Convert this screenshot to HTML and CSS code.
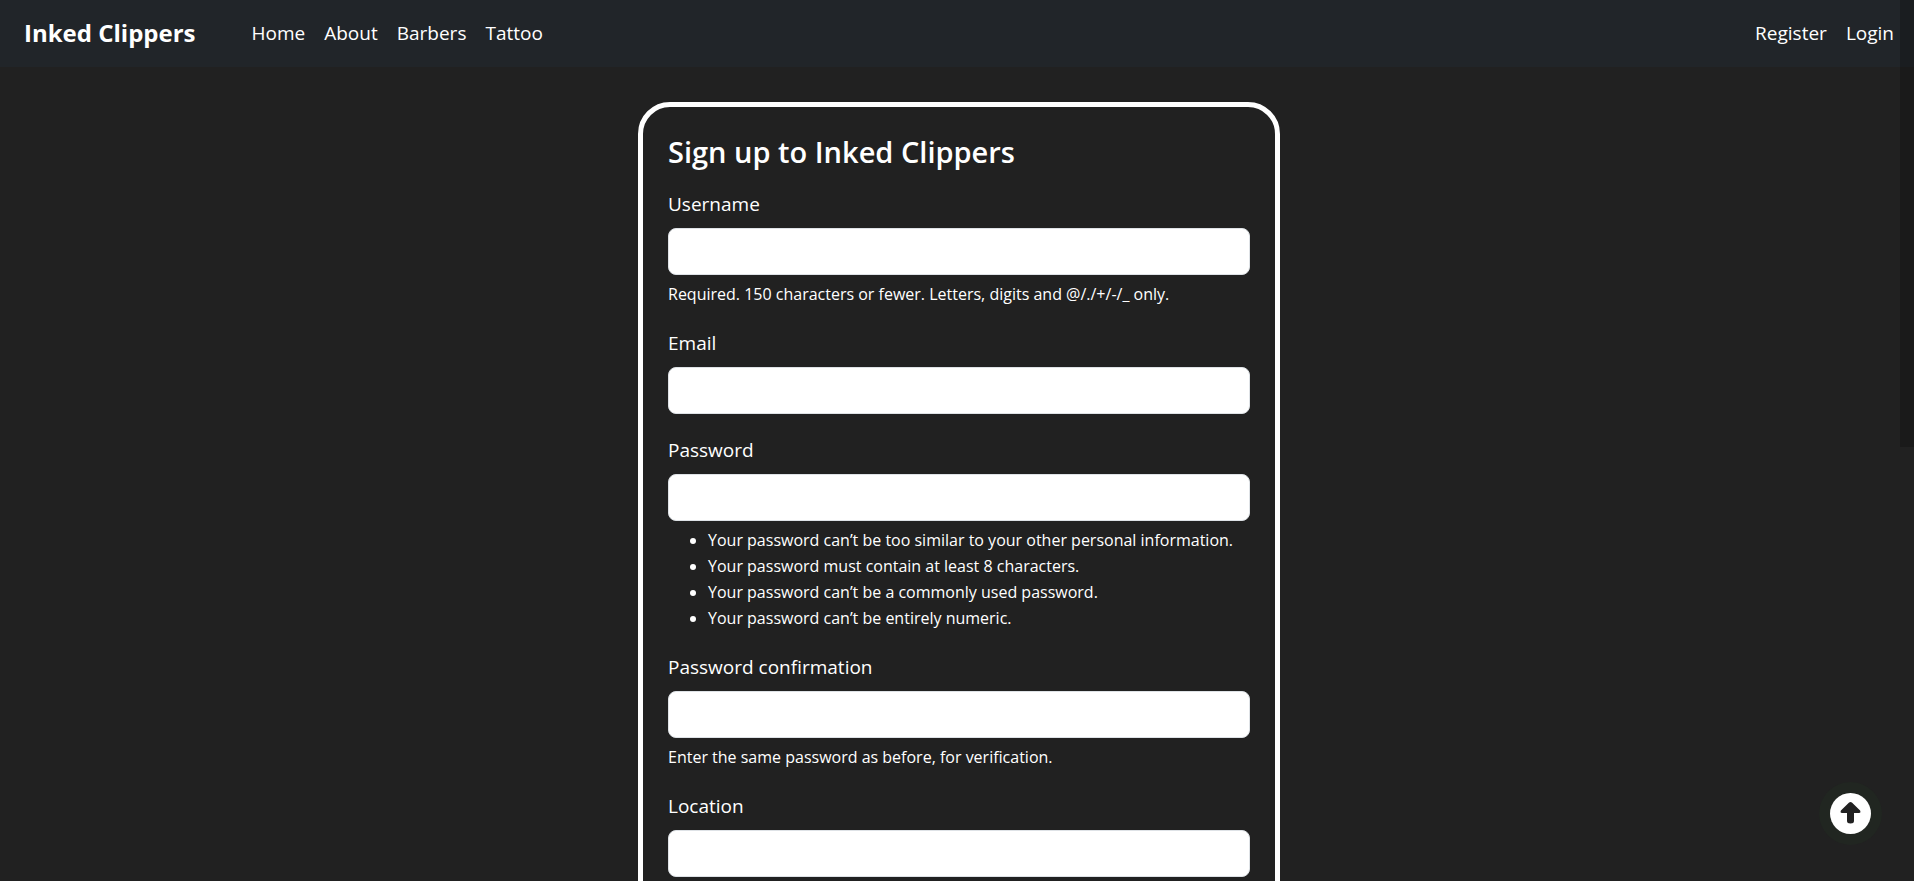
FILE: index.html
```html
<!DOCTYPE html>
<html lang="en">
<head>
<meta charset="utf-8">
<title>Inked Clippers</title>
<link rel="stylesheet" href="styles.css">
</head>
<body>
<header class="navbar">
  <a class="brand" href="#">Inked Clippers</a>
  <nav class="nav-links">
    <a href="#">Home</a>
    <a href="#">About</a>
    <a href="#">Barbers</a>
    <a href="#">Tattoo</a>
  </nav>
  <nav class="nav-links nav-account">
    <a href="#">Register</a>
    <a href="#">Login</a>
  </nav>
</header>
<main class="page">
  <form class="card">
    <h1 class="title">Sign up to Inked Clippers</h1>
    <div class="field">
      <label for="username">Username</label>
      <input id="username" type="text">
      <p class="help">Required. 150 characters or fewer. Letters, digits and @/./+/-/_ only.</p>
    </div>
    <div class="field">
      <label for="email">Email</label>
      <input id="email" type="email">
    </div>
    <div class="field">
      <label for="password1">Password</label>
      <input id="password1" type="password">
      <ul class="help rules">
        <li>Your password can’t be too similar to your other personal information.</li>
        <li>Your password must contain at least 8 characters.</li>
        <li>Your password can’t be a commonly used password.</li>
        <li>Your password can’t be entirely numeric.</li>
      </ul>
    </div>
    <div class="field">
      <label for="password2">Password confirmation</label>
      <input id="password2" type="password">
      <p class="help">Enter the same password as before, for verification.</p>
    </div>
    <div class="field">
      <label for="location">Location</label>
      <input id="location" type="text">
    </div>
  </form>
</main>
<button class="to-top" type="button" aria-label="Back to top">
  <svg viewBox="0 0 41 41" aria-hidden="true">
    <circle class="disc" cx="20.5" cy="20.5" r="20.5"/>
    <path class="arrow" d="M19.1 9.5 L10.9 17.500 Q9.900 20 12 20 H17 V28 Q17 30.500 20.500 30.500 Q24 30.500 24 28 V20 H29 Q31.100 20 30.100 17.500 L21.900 9.500 Q20.500 8.300 19.100 9.500 Z"/>
  </svg>
</button>
<div class="scroll-thumb"></div>
</body>
</html>
```

FILE: styles.css
```css
* {
  box-sizing: border-box;
}

body {
  margin: 0;
  height: 100vh;
  display: flex;
  flex-direction: column;
  overflow: hidden;
  background: #212121;
  color: #fff;
  font-family: "Segoe UI", "Open Sans", "Noto Sans", sans-serif;
  font-size: 19px;
  line-height: 30px;
}

.navbar {
  display: flex;
  align-items: center;
  flex: none;
  padding: 18px 20px 19px 24px;
  background: #212529;
}

.navbar a {
  color: #fff;
  text-decoration: none;
}

.brand {
  margin-right: 56px;
  font-size: 24px;
  font-weight: 700;
}

.nav-links {
  display: flex;
  gap: 19px;
}

.nav-account {
  margin-left: auto;
}

.page {
  flex: 1;
  min-height: 0;
  padding: 35px 0 0 4px;
  overflow: hidden;
}

.card {
  max-width: 642px;
  margin: 0 auto;
  padding: 26px 25px 100px;
  border: 5px solid #fff;
  border-radius: 32px;
}

.title {
  margin: 0 0 18px;
  font-size: 29px;
  font-weight: 600;
  line-height: 38px;
}

.field {
  margin-bottom: 21px;
}

.field label {
  display: block;
  margin-bottom: 9px;
}

.field input {
  display: block;
  width: 100%;
  height: 47px;
  padding: 8px 15px;
  border: 1px solid #dee2e6;
  border-radius: 8px;
  background: #fff;
  color: #212529;
  font: inherit;
}

.help {
  margin: 6px 0 0;
  font-size: 16px;
  line-height: 26px;
}

.rules {
  padding-left: 40px;
}

.to-top {
  position: fixed;
  right: 32px;
  bottom: 36px;
  padding: 11px;
  border: 0;
  border-radius: 50%;
  background: #212621;
  cursor: pointer;
}

.to-top svg {
  display: block;
  width: 41px;
  height: 41px;
}

.disc {
  fill: #fff;
}

.arrow {
  fill: #212121;
}

.scroll-thumb {
  position: fixed;
  top: 0;
  right: 0;
  width: 14px;
  height: 447px;
  background: rgba(0, 0, 0, 0.2);
}
```
